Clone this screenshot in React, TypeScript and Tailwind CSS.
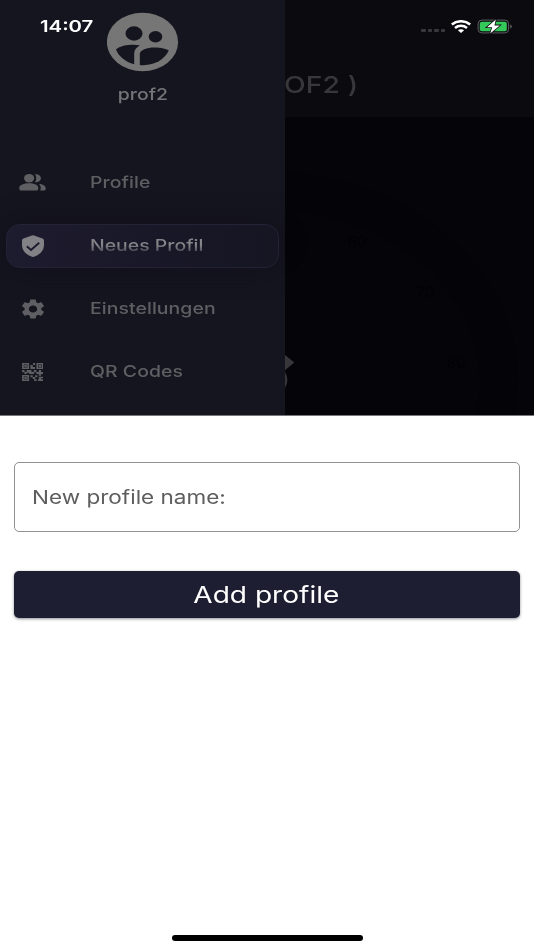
import React from 'react';
import { MdSettings } from 'react-icons/md';

const ProfileLogo: React.FC = () => (
  <svg viewBox="0 0 72 60" className="w-[72px] h-[60px]">
    <ellipse cx="35.5" cy="30" rx="35.6" ry="29.3" fill="#767676" />
    <g fill="#15151f">
      <ellipse cx="27" cy="21.5" rx="8.5" ry="7.2" />
      <ellipse cx="48.5" cy="24.8" rx="6.8" ry="5.7" />
      <path d="M9 37.4C14 33 26 32 33 33.4C29 35.5 27.2 38 27.2 42V52.2C18.2 49.6 11.7 44.5 9 37.4Z" />
      <path d="M32.8 53V42C32.8 38 40 35.5 47.5 35.5C54 35.5 60 37 61.8 38.6C57 48.5 46 54.3 32.8 53Z" />
    </g>
  </svg>
);

const PeopleIcon: React.FC = () => (
  <svg viewBox="0 0 80 50" className="w-[27px] h-[17px] -mt-px" fill="currentColor">
    <ellipse cx="30" cy="12.5" rx="15" ry="12.5" />
    <path d="M30 27.5C45 27.5 57 33 57 40V44Q57 49 51 49H7Q1 49 1 44V40C1 33 15 27.5 30 27.5Z" />
    <path d="M47 .8C57 -1 65 5 65 12.5S57 26 47 24.2C52.5 18 52.5 7 47 .8Z" />
    <path d="M58 28.5C71 30 79 35 79 41V44Q79 49 74 49H62.5Q64.5 46 64.5 40C64.5 35 62 31 58 28.5Z" />
  </svg>
);

const ShieldIcon: React.FC = () => (
  <svg viewBox="0 0 22 22" className="w-[22px] h-[22px]">
    <path d="M9.9 .4a3 3 0 0 1 2.2 0L20.5 3.5Q22 4 22 5.5V10C22 16 17 20.5 11 22C5 20.5 0 16 0 10V5.5Q0 4 1.5 3.5Z" fill="#828286" />
    <path d="M4.8 11.3L9 15L17.2 7.7" fill="none" stroke="#1c1a2d" strokeWidth="1.9" />
  </svg>
);

const QrIcon: React.FC = () => (
  <svg viewBox="0 0 64 54" className="w-[21.5px] h-[18px]" fill="currentColor">
    {/* Finder squares */}
    <path fillRule="evenodd" d="M0 0H21V18H0ZM5 4.5V13.5H16V4.5Z" />
    <path fillRule="evenodd" d="M43 0H64V18H43ZM48 4.5V13.5H59V4.5Z" />
    <path fillRule="evenodd" d="M0 36H21V54H0ZM5 40.5V49.5H16V40.5Z" />
    <path d="M7 6H14V12H7ZM50 6H57V12H50ZM7 42H14V48H7Z" />
    {/* Data modules */}
    <path d="M33 0H39V6H33ZM25 6H32V12H39V18H25Z" />
    <path d="M0 21H7V26H14V21H28V27H35V21H43V27H50V21H57V27H64V33H57V38H50V33H43V28H36V33H21V29H14V33H7V28H0Z" />
    <path d="M25 37H32V42H39V37H46V43H39V48H32V43H25Z" />
    <path d="M50 41H64V46H57V49H63V54H48V48H51V46H50ZM36 49H44V54H36Z" />
  </svg>
);

const menuItems = [
  { label: 'Profile', icon: <PeopleIcon /> },
  { label: 'Neues Profil', icon: <ShieldIcon />, active: true },
  { label: 'Einstellungen', icon: <MdSettings preserveAspectRatio="none" className="w-[28px] h-[24px] -mt-px ml-px" /> },
  { label: 'QR Codes', icon: <QrIcon /> },
];

const StatusBar: React.FC = () => (
  <div className="absolute inset-x-0 top-0 h-[52px] flex items-center justify-between pl-10 pr-[22px]">
    <span className="text-[16.4px] font-semibold text-white origin-left scale-x-[1.24]">14:07</span>
    <div className="flex items-center">
      <div className="flex gap-[2px] mt-[9px] mr-[6px]">
        {[0, 1, 2, 3].map(i => (
          <span key={i} className="w-[4.5px] h-[3.5px] rounded-[1px] bg-[#39393d]" />
        ))}
      </div>
      <svg viewBox="0 0 20 13" className="w-5 h-[13px] mr-[6px]" fill="none" stroke="#fff" strokeWidth="2.6">
        <path d="M.8 4.5C6 .2 14 .2 19.2 4.5" />
        <path d="M4 7.9C7.5 5.1 12.5 5.1 16 7.9" />
        <path d="M6.9 10.3C8.7 8.9 11.3 8.9 13.1 10.3L10 13Z" fill="#fff" stroke="none" />
      </svg>
      <svg viewBox="0 0 35 15" className="w-[35px] h-[15px]">
        <rect x="1.1" y="1.1" width="30.5" height="12.8" rx="3.7" fill="none" stroke="#606064" />
        <rect x="2.8" y="2.7" width="27" height="9.6" rx="2" fill="#34c759" />
        <path d="M33.2 5.4Q34.8 5.8 34.8 7.5T33.2 9.6Z" fill="#606064" />
        <path d="M18.8 .6L10 8.3H15.2L13.2 14.6L22.8 6.4H17.5Z" fill="#fff" stroke="#0a0a0f" strokeWidth="1.6" paintOrder="stroke" />
      </svg>
    </div>
  </div>
);

const Drawer: React.FC = () => (
  <aside className="w-[285px] shrink-0 bg-[#15151f] flex flex-col">
    <div className="h-[150px] pt-3 flex flex-col items-center">
      <ProfileLogo />
      <span className="mt-[10px] text-[16.2px] leading-6 font-medium text-[#747478] scale-x-[1.2]">prof2</span>
    </div>
    <nav className="pl-[6px] pr-[6px] pt-[11px] flex flex-col gap-[19px]">
      {menuItems.map(item => (
        <div
          key={item.label}
          className={`h-[44px] flex items-center rounded-[14px] border ${
            item.active
              ? 'border-[#232236] bg-linear-to-r from-[#1d1b2e] to-[#161522] shadow-[0_0_22px_6px_rgba(18,17,28,0.9)]'
              : 'border-transparent text-[#5f5f63]'
          }`}
        >
          <span className="w-[51px] flex justify-center">{item.icon}</span>
          <span
            className={`ml-8 -mt-[2px] text-[16.2px] leading-6 font-medium origin-left scale-x-[1.2] ${
              item.active ? 'bg-linear-to-b from-[#85858a] from-50% to-[#403f4c] to-85% bg-clip-text text-transparent' : 'tracking-[0.05px]'
            }`}
          >
            {item.label}
          </span>
        </div>
      ))}
    </nav>
  </aside>
);

const Gauge: React.FC = () => (
  <svg viewBox="285 117 249 298" className="w-[249px] h-[298px]">
    <ellipse cx="267" cy="381" rx="232" ry="190" fill="none" stroke="#040308" strokeWidth="38" />
    <ellipse cx="272" cy="243" rx="35" ry="34" fill="#040308" />
    <g fill="#020205" fontSize="15" fontWeight="500" textAnchor="middle">
      <text x="357" y="247">60</text>
      <text x="425" y="297">70</text>
      <text x="456" y="368">80</text>
    </g>
    <path d="M285 355L294.3 362.5L285 370.3Z" fill="#373739" />
    <path d="M284 372.5Q288.5 380 284 387.5" fill="none" stroke="#373739" strokeWidth="2.2" />
  </svg>
);

const App: React.FC = () => {
  return (
    <div className="relative w-[534px] h-[950px] bg-white flex flex-col overflow-hidden font-['Inter',sans-serif]">
      {/* Dimmed screen behind the sheet */}
      <div className="h-[415px] shrink-0 flex overflow-hidden">
        <Drawer />
        <main className="flex-1 bg-[#050509] flex flex-col overflow-hidden">
          <header className="h-[117px] shrink-0 bg-[#0a0a0f] flex overflow-hidden pt-[69px]">
            <span className="-ml-[1.5px] text-[23.2px] leading-8 font-medium tracking-[0.1px] text-[#38383b] whitespace-nowrap origin-left scale-x-[1.22]">
              OF2 )
            </span>
          </header>
          <Gauge />
        </main>
      </div>

      {/* Sheet */}
      <section className="flex-1 bg-white border-t border-[#77777b] px-[14px] pt-[46px] flex flex-col">
        <div className="h-[70px] rounded-[5px] border border-[#929292] pl-[16.5px] pt-[2px] flex items-center">
          <span className="text-[18.7px] text-[#5e5e5e] whitespace-nowrap origin-left scale-x-[1.205]">
            New profile name:
          </span>
        </div>
        <button className="mt-[39px] h-[47px] rounded-[5px] bg-[#1e1e32] text-white flex items-center justify-center pt-[2px] shadow-[0_1px_3px_rgba(30,30,50,0.5)]">
          <span className="mr-[2px] text-[23.2px] scale-x-[1.21]">Add profile</span>
        </button>
        <div className="mt-auto mb-[9.5px] self-center w-[191px] h-[6px] rounded-full bg-black" />
      </section>

      <StatusBar />
    </div>
  );
};

export default App;
